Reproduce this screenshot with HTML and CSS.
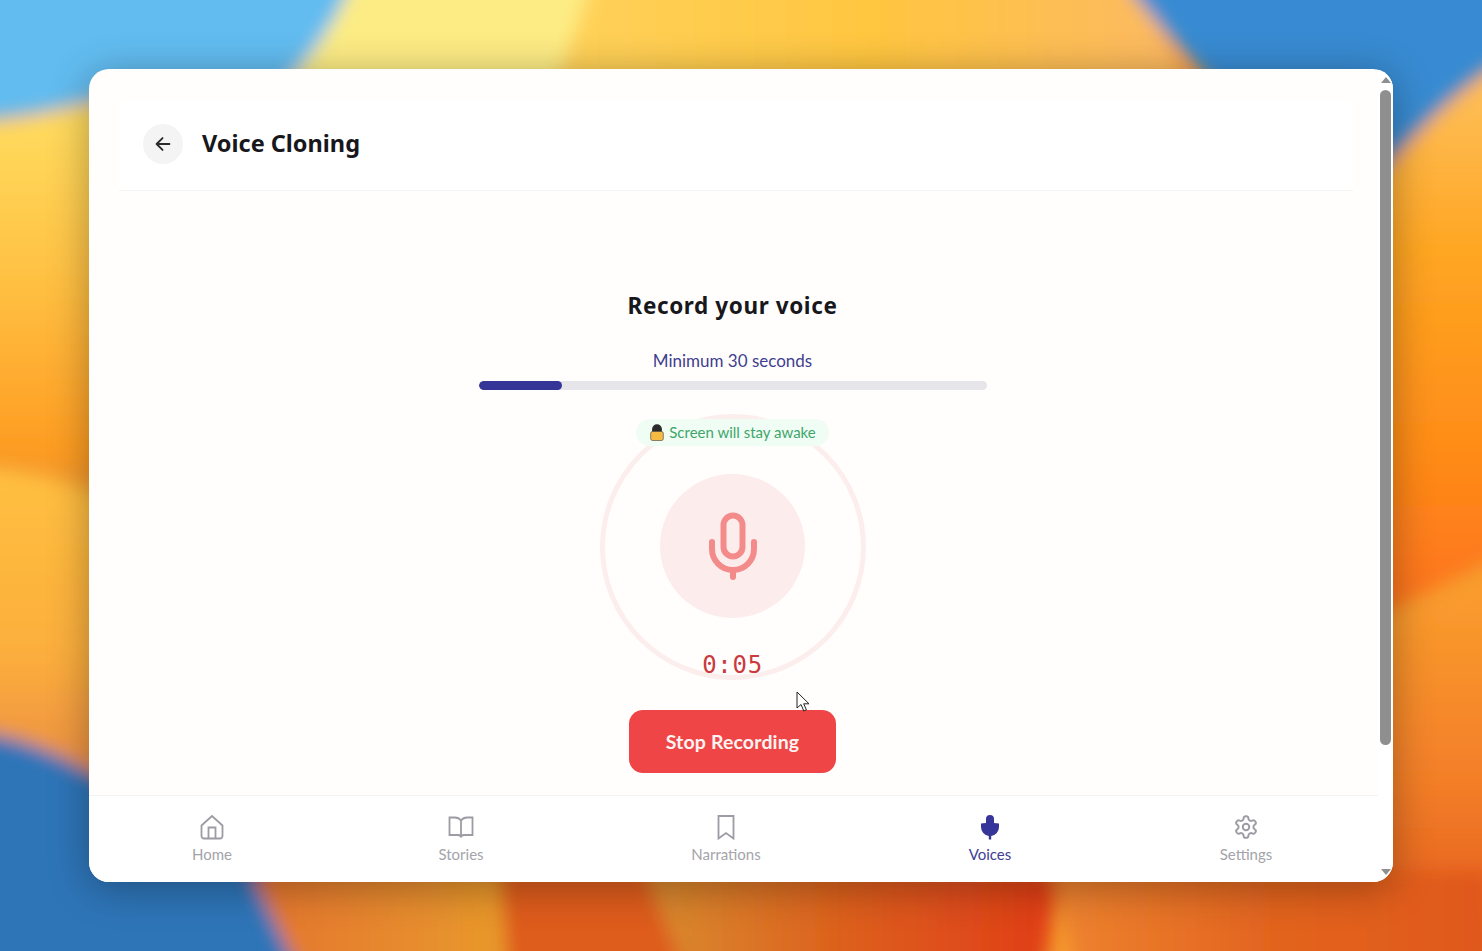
FILE: index.html
```html
<!DOCTYPE html>
<html lang="en">
<head>
  <meta charset="UTF-8" />
  <meta name="viewport" content="width=device-width, initial-scale=1" />
  <title>Voice Cloning</title>
  <link rel="stylesheet" href="styles.css">
</head>
<body>

  <svg class="wallpaper" viewBox="0 0 1482 951" preserveAspectRatio="none" aria-hidden="true">
    <defs>
      <filter id="soft" x="-20%" y="-20%" width="140%" height="140%"><feGaussianBlur stdDeviation="9" /></filter>
      <linearGradient id="leftSun" x1="0" y1="0" x2="0" y2="1">
        <stop offset="0" stop-color="#ffdf62" />
        <stop offset=".5" stop-color="#ffc042" />
        <stop offset="1" stop-color="#fd981e" />
      </linearGradient>
      <linearGradient id="leftLow" x1="0" y1="0" x2="0" y2="1">
        <stop offset="0" stop-color="#ffc040" />
        <stop offset=".6" stop-color="#fcae3c" />
        <stop offset="1" stop-color="#ea8c44" />
      </linearGradient>
      <linearGradient id="rightTop" x1="0" y1="0" x2="0" y2="1">
        <stop offset="0" stop-color="#fdc464" />
        <stop offset=".35" stop-color="#ffa622" />
        <stop offset=".7" stop-color="#ff8c18" />
        <stop offset="1" stop-color="#fd701c" />
      </linearGradient>
      <linearGradient id="rightLow" x1="0" y1="0" x2="0" y2="1">
        <stop offset="0" stop-color="#fba02e" />
        <stop offset=".55" stop-color="#f37e28" />
        <stop offset="1" stop-color="#e0561a" />
      </linearGradient>
      <linearGradient id="topGold" x1="0" y1="0" x2="1" y2="0">
        <stop offset="0" stop-color="#ffd25a" />
        <stop offset=".5" stop-color="#ffc640" />
        <stop offset="1" stop-color="#fcb864" />
      </linearGradient>
      <linearGradient id="lowA" x1="0" y1="0" x2="1" y2="0">
        <stop offset="0" stop-color="#e4742e" />
        <stop offset="1" stop-color="#e89a2c" />
      </linearGradient>
      <linearGradient id="lowB" x1="0" y1="0" x2="1" y2="0">
        <stop offset="0" stop-color="#d88c30" />
        <stop offset=".5" stop-color="#dd5e1c" />
        <stop offset="1" stop-color="#e03c18" />
      </linearGradient>
      <linearGradient id="lowC" x1="0" y1="0" x2="1" y2="0">
        <stop offset="0" stop-color="#ee8430" />
        <stop offset=".5" stop-color="#e2641f" />
        <stop offset="1" stop-color="#e0581a" />
      </linearGradient>
    </defs>
    <rect width="1482" height="951" fill="#f59a2c" />
    <g filter="url(#soft)">
      <path d="M-40 -40 H380 C350 20 320 60 290 100 L100 100 C60 108 30 118 -40 122 Z" fill="#62bcf0" />
      <path d="M360 -40 H610 L560 100 H270 C310 60 340 20 360 -40 Z" fill="#fdec84" />
      <path d="M600 -40 H1120 L1200 100 H550 Z" fill="url(#topGold)" />
      <path d="M1110 -40 H1530 V50 C1470 70 1420 130 1360 190 L1230 100 C1190 60 1150 20 1110 -40 Z" fill="#378bd2" />
      <path d="M1370 190 C1420 130 1470 80 1530 50 V540 L1370 620 Z" fill="url(#rightTop)" />
      <path d="M1370 640 C1410 610 1470 580 1530 565 V960 H1370 Z" fill="url(#rightLow)" />
      <path d="M-40 124 C30 122 60 110 120 95 V470 L-40 455 Z" fill="url(#leftSun)" />
      <path d="M-40 466 C30 470 70 480 120 505 V780 L-40 726 Z" fill="url(#leftLow)" />
      <path d="M-40 730 C30 735 70 760 120 790 H240 L312 1000 H-40 Z" fill="#2f74b8" />
      <path d="M250 870 H510 L505 1000 H312 Z" fill="url(#lowA)" />
      <path d="M500 870 H655 L690 1000 H510 Z" fill="#de5c1c" />
      <path d="M645 870 H1060 L1040 1000 H695 Z" fill="url(#lowB)" />
      <path d="M1050 870 H1490 V1000 H1085 Z" fill="url(#lowC)" />
    </g>
  </svg>

  <div class="window">
    <div class="page">
      <header class="topbar">
        <button class="back" type="button" aria-label="Back">
          <svg viewBox="0 0 24 24" width="22" height="22"><path d="M19 12H5M11.500 5.500 5 12l6.500 6.500" /></svg>
        </button>
        <h1>Voice Cloning</h1>
      </header>

      <main class="recorder">
        <h2>Record your voice</h2>
        <p class="hint">Minimum 30 seconds</p>
        <div class="progress"><div class="progress-fill" style="width: 16.5%"></div></div>

        <div class="stage">
          <div class="ring"></div>
          <div class="awake">
            <svg viewBox="0 0 14 17" width="14" height="17" aria-hidden="true">
              <path d="M2.800 9V5.200a4.200 4.200 0 0 1 8.400 0V9Z" fill="#2b2b2b" stroke="#2b2b2b" stroke-width="1.400" />
              <rect x=".7" y="7.500" width="12.600" height="9" rx="1.800" fill="#f6bb43" stroke="#5c5240" stroke-width=".7" />
            </svg>
            <span>Screen will stay awake</span>
          </div>
          <div class="mic-circle">
            <svg viewBox="0 0 48 68" width="48" height="68" aria-hidden="true">
              <rect x="14.500" y="3.500" width="19" height="41" rx="9.500" />
              <path d="M3 30v7a21 21 0 0 0 42 0v-7M24 58v7" />
            </svg>
          </div>
          <div class="timer">0:05</div>
        </div>

        <button class="stop" type="button">Stop Recording</button>
      </main>

      <nav class="tabs">
        <a class="tab" href="#">
          <svg viewBox="0 0 26 26"><path d="M2.500 11.500 13 2l10.500 9.500V22a2.500 2.500 0 0 1-2.500 2.500H5A2.500 2.500 0 0 1 2.500 22Z" /><path d="M9.500 24.500V13.500h7v11" /></svg>
          Home
        </a>
        <a class="tab" href="#">
          <svg viewBox="0 0 26 26"><path d="M13 6.500C11.500 4.500 10 3.500 7 3.500H1.500v17.500H10c1.800 0 3 1 3 2.500 0-1.500 1.200-2.500 3-2.500h8.500V3.500H19c-3 0-4.500 1-6 3Zm0 0v17" /></svg>
          Stories
        </a>
        <a class="tab" href="#">
          <svg viewBox="0 0 26 26"><path d="M5.500 2h15v22.500L13 19l-7.500 5.500Z" /></svg>
          Narrations
        </a>
        <a class="tab active" href="#">
          <svg viewBox="0 0 26 26"><path class="solid" d="M9 5a4 4 0 0 1 8 0v4l5 .5V13a9 9 0 0 1-7.800 8.900v3.600h-2.400v-3.600A9 9 0 0 1 4 13V9.500L9 9Z" /></svg>
          Voices
        </a>
        <a class="tab tab-gear" href="#">
          <svg viewBox="0 0 24 24"><path d="M12.220 2h-.44a2 2 0 0 0-2 2v.18a2 2 0 0 1-1 1.730l-.43.250a2 2 0 0 1-2 0l-.15-.080a2 2 0 0 0-2.730.730l-.22.380a2 2 0 0 0 .730 2.730l.15.100a2 2 0 0 1 1 1.720v.510a2 2 0 0 1-1 1.740l-.15.090a2 2 0 0 0-.730 2.730l.22.380a2 2 0 0 0 2.730.730l.15-.080a2 2 0 0 1 2 0l.43.250a2 2 0 0 1 1 1.730V20a2 2 0 0 0 2 2h.44a2 2 0 0 0 2-2v-.18a2 2 0 0 1 1-1.730l.43-.250a2 2 0 0 1 2 0l.15.080a2 2 0 0 0 2.730-.730l.22-.390a2 2 0 0 0-.730-2.730l-.15-.080a2 2 0 0 1-1-1.740v-.5a2 2 0 0 1 1-1.740l.15-.090a2 2 0 0 0 .730-2.730l-.22-.380a2 2 0 0 0-2.730-.730l-.15.080a2 2 0 0 1-2 0l-.43-.250a2 2 0 0 1-1-1.730V4a2 2 0 0 0-2-2Z" /><circle cx="12" cy="12" r="3" /></svg>
          Settings
        </a>
      </nav>
    </div>

    <div class="scrollbar">
      <span class="arrow up"></span>
      <span class="thumb"></span>
      <span class="arrow down"></span>
    </div>

    <svg class="cursor" viewBox="0 0 15 22" width="15" height="22" aria-hidden="true">
      <path d="M1 1v16l4-3.500L7.800 20l2.600-1.200-2.700-6H13Z" />
    </svg>
  </div>

</body>
</html>
```

FILE: styles.css
```css
body {
  margin: 0;
  height: 951px;
  box-sizing: border-box;
  padding: 69px 89px;
  overflow: hidden;
  font-family: "Lato", "Noto Sans", sans-serif;
  background: #f59a2c;
}

.wallpaper {
  position: absolute;
  top: 0;
  left: 0;
  width: 1482px;
  height: 951px;
}

.window {
  position: relative;
  display: flex;
  width: 1304px;
  height: 813px;
  background: #fffefc;
  border-radius: 20px;
  overflow: hidden;
  box-shadow: 0 6px 42px rgba(0, 0, 0, 0.32);
}

.page {
  flex: 1;
  display: flex;
  flex-direction: column;
  min-width: 0;
}

.topbar {
  display: flex;
  align-items: center;
  gap: 19px;
  height: 90px;
  margin: 31px 25px 0 30px;
  padding: 0 24px;
  background: #fff;
  border-bottom: 1px solid #f6f5f3;
}

.back {
  display: flex;
  align-items: center;
  justify-content: center;
  width: 40px;
  height: 40px;
  margin-top: -3px;
  padding: 0;
  border: none;
  border-radius: 50%;
  background: #f4f4f4;
}

.back svg path {
  fill: none;
  stroke: #2b2b2b;
  stroke-width: 2;
  stroke-linecap: round;
  stroke-linejoin: round;
}

h1 {
  margin: -5px 0 0 0;
  font-family: "Noto Sans", sans-serif;
  font-size: 23.500px;
  font-weight: 700;
  color: #17171c;
}

.recorder {
  flex: 1;
  display: flex;
  flex-direction: column;
  align-items: center;
  padding-right: 2px;
}

h2 {
  margin: 100px 0 0 0;
  font-family: "Noto Sans", sans-serif;
  font-size: 22.500px;
  line-height: 30px;
  letter-spacing: .6px;
  font-weight: 700;
  color: #17171c;
}

.hint {
  margin: 30px 0 0 0;
  font-size: 17px;
  line-height: 20px;
  color: #3f3f8f;
}

.progress {
  width: 508px;
  height: 9px;
  margin-top: 10px;
  border-radius: 5px;
  background: #e5e5ea;
  overflow: hidden;
}

.progress-fill {
  height: 100%;
  border-radius: 5px;
  background: #353597;
}

.stage {
  position: relative;
  display: flex;
  flex-direction: column;
  align-items: center;
  width: 266px;
  height: 266px;
  margin-top: 24px;
}

.ring {
  position: absolute;
  top: 0;
  left: 0;
  width: 266px;
  height: 266px;
  box-sizing: border-box;
  border: 5px solid #fdeeee;
  border-radius: 50%;
}

.awake {
  position: relative;
  display: flex;
  align-items: center;
  gap: 5px;
  height: 27px;
  margin-top: 5px;
  padding: 0 13px 0 14px;
  border-radius: 14px;
  background: #f0fdf4;
  font-size: 15px;
  color: #3fa66b;
  white-space: nowrap;
}

.mic-circle {
  position: relative;
  display: flex;
  align-items: center;
  justify-content: center;
  width: 145px;
  height: 145px;
  margin-top: 28px;
  border-radius: 50%;
  background: #fdecec;
}

.mic-circle svg {
  fill: none;
  stroke: #f38b8b;
  stroke-width: 6;
  stroke-linecap: round;
}

.timer {
  position: relative;
  margin-top: 32px;
  font-family: "DejaVu Sans Mono", monospace;
  font-size: 24px;
  line-height: 30px;
  letter-spacing: .7px;
  color: #cb3a3f;
}

.stop {
  width: 207px;
  height: 63px;
  margin-top: 30px;
  border: none;
  border-radius: 14px;
  background: #ef4546;
  font-family: "Lato", "Noto Sans", sans-serif;
  font-size: 19.500px;
  font-weight: 700;
  letter-spacing: .15px;
  color: #fdf3f1;
}

.tabs {
  display: grid;
  grid-template-columns: 246px 252px 278px 250px 263px;
  height: 87px;
  box-sizing: border-box;
  padding: 18px 0 0 0;
  border-top: 1px solid #f4f3f1;
  background: #fff;
}

.tab {
  display: flex;
  flex-direction: column;
  align-items: center;
  gap: 5px;
  font-size: 15px;
  line-height: 18px;
  color: #a4a4aa;
  text-decoration: none;
}

.tab svg {
  width: 26px;
  height: 26px;
  fill: none;
  stroke: #9c9ca4;
  stroke-width: 1.800;
}

.tab-gear {
  padding-right: 1px;
}

.tab.active {
  color: #3e3e92;
}

.tab .solid {
  fill: #35359a;
  stroke: none;
}

.scrollbar {
  position: relative;
  display: flex;
  flex-direction: column;
  align-items: center;
  width: 15px;
  background: #fff;
}

.thumb {
  width: 11px;
  height: 655px;
  margin-top: 7px;
  border-radius: 6px;
  background: #8f8f8f;
}

.arrow {
  width: 0;
  height: 0;
  border-left: 5px solid transparent;
  border-right: 5px solid transparent;
}

.arrow.up {
  margin-top: 8px;
  border-bottom: 6px solid #8f8f8f;
}

.arrow.down {
  margin-top: auto;
  margin-bottom: 7px;
  border-top: 6px solid #8f8f8f;
}

.cursor {
  position: absolute;
  top: 622px;
  left: 707px;
}

.cursor path {
  fill: #fff;
  stroke: #222;
  stroke-width: 1;
  stroke-linejoin: round;
}
```
